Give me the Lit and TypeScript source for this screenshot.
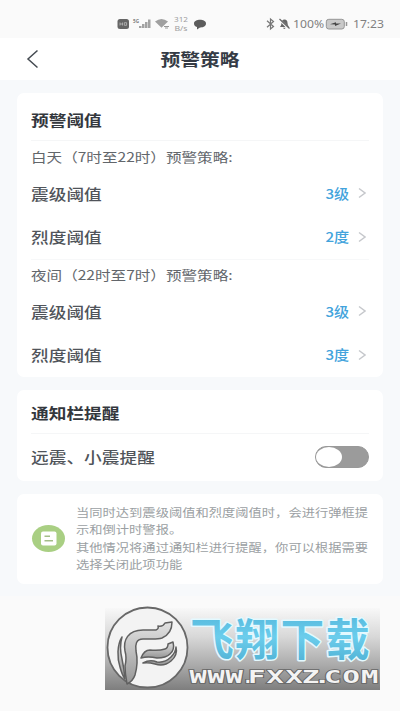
import { LitElement, html, css } from "lit";
import { customElement, property } from "lit/decorators.js";

@customElement("status-bar")
class StatusBar extends LitElement {
  static styles = css`
    :host { display: block; height: 38px; background: #fafafa; }
    svg { display: block; }
    text { font-family: "Noto Sans", sans-serif; fill: #808080; }
  `;
  render() {
    return html`<svg width="400" height="38" viewBox="0 0 400 38">
      <rect x="117.5" y="19" width="11.5" height="10" rx="2.5" fill="#666" />
      <path d="M120 22.5v3M122.5 22.5v3M120 24h2.5M124.3 22.7h2.3v2.6h-2.3z" stroke="#bbb" stroke-width=".8" fill="none" />
      <text x="133" y="23" font-size="5" font-weight="700" textLength="6" lengthAdjust="spacingAndGlyphs">5G</text>
      <path d="M139 28v-2h2.500v2zM142 28v-4h2.500v4zM145 28v-6h2.500v6zM148 28v-8.500h2.500v8.500z" fill="#a2a2a2" />
      <path d="M155 21.500q6.500-5 13 0l-6.500 6.300z" fill="#a0a0a0" />
      <path d="M164 26.500h5M165 28h3" stroke="#999" stroke-width="1" />
      <text x="174" y="22" font-size="7.500" textLength="14" lengthAdjust="spacingAndGlyphs" opacity=".75">312</text>
      <text x="174.500" y="30.500" font-size="7" textLength="13" lengthAdjust="spacingAndGlyphs" opacity=".75">B/s</text>
      <path d="M194 23.500c0-5 12-5 12 0 0 3.500-4 4-6 4l-3 2v-2.500q-3-1-3-3.500z" fill="#5c5c5c" />
      <path d="M267 20.800l6.500 5.700-3 2.500v-10l3 2.500-6.500 5.700" stroke="#777" stroke-width="1.200" fill="none" />
      <path d="M280 27q1.500-1.500 1.500-4 0-3.500 3-3.500t3 3.500q0 2.500 1.500 4zM282.800 27.800h3q-1.500 2.200-3 0z" fill="#666" />
      <path d="M279 19l10 10" stroke="#fafafa" stroke-width="2.200" /><path d="M279.500 19l10 9.500" stroke="#666" stroke-width="1.200" />
      <text x="293" y="28" font-size="10.500" textLength="31" lengthAdjust="spacingAndGlyphs">100%</text>
      <rect x="326.300" y="19.300" width="18" height="9.700" rx="2.500" fill="#c9c9c9" stroke="#959595" />
      <path d="M346.500 22v4" stroke="#959595" stroke-width="1.500" />
      <path d="M330 24.200l6-2v1.400h5l-6 2.400v-1.500z" fill="#444" />
      <text x="353" y="28" font-size="10.500" textLength="31" lengthAdjust="spacingAndGlyphs">17:23</text>
    </svg>`;
  }
}

@customElement("setting-row")
class SettingRow extends LitElement {
  @property() label = "";
  @property() value = "";
  static styles = css`
    :host { display: flex; align-items: center; justify-content: space-between; height: 43.5px; }
    .label { font-size: 15px; font-weight: 500; color: #50545a; transform: scaleX(1.18); transform-origin: left; }
    .right { display: flex; align-items: center; gap: 9px; margin-right: 2.500px; }
    .value { font-size: 13.5px; font-weight: 500; color: #42a3dc; transform: scaleX(1.12); transform-origin: right; }
    svg { display: block; }
  `;
  render() {
    return html`<span class="label">${this.label}</span>
      ${this.value
        ? html`<span class="right"><span class="value">${this.value}</span>
            <svg width="8" height="12" viewBox="0 0 8 12"><path d="M1 1.500l6 4.500-6 4.500" fill="none" stroke="#c6c8cc" stroke-width="1.500" /></svg></span>`
        : html`<slot></slot>`}`;
  }
}

@customElement("site-badge")
class SiteBadge extends LitElement {
  static styles = css`
    :host { display: block; width: 275px; height: 82px; background: linear-gradient(#f8f8f8, #d8d8d8 35%, #aaa 70%, #7e7e7e); }
    svg { display: block; overflow: visible; }
    .name { font: 700 44px "Noto Sans CJK SC", sans-serif; letter-spacing: 1.5px; paint-order: stroke; stroke: #e4f9ff; stroke-width: 3px; stroke-linejoin: round; fill: url(#sky); }
    .url { font: 700 18px "DejaVu Sans Mono", monospace; paint-order: stroke; stroke: #666; stroke-width: 1.5px; fill: #f3f3f3; }
  `;
  render() {
    const scale = 1.6;
    const stops = [84.5, 102.5, 120.500, 135, 143, 161.5, 180.500, 197, 208.500, 219, 237.5, 256].map((x) => (x / scale).toFixed(2)).join(" ");
    return html`<svg width="275" height="82" viewBox="0 0 275 82">
      <defs>
        <linearGradient id="sky" x1="0" y1="0" x2="0" y2="1">
          <stop offset="0" stop-color="#4fb2d8" /><stop offset=".5" stop-color="#6bcdec" /><stop offset="1" stop-color="#4bacd0" />
        </linearGradient>
        <linearGradient id="body" x1="0" y1="0" x2="0" y2="1">
          <stop offset="0" stop-color="#e2e2e2" /><stop offset="1" stop-color="#969696" />
        </linearGradient>
      </defs>
      <circle cx="42.500" cy="39.500" r="40" fill="#f3f3f3" stroke="#686868" stroke-width="1.800" />
      <g stroke="#606060" stroke-width="1.500" stroke-linejoin="round" fill="url(#body)">
        <path d="M17 29C12 37 12 50 15 59Q17 67 20 71Q19 60 17 51C15 43 15 36 17 29Z" />
        <path d="M22 76Q20 66 20 58Q22 50 20 43C18 32 23 22 38 22H51Q54 21 53 18Q58 19 60 15L67 14C67 22 64 27 57 30Q54 31 47 31H38C31 31 30 37 31 43C33 52 32 60 30 67Q28 73 22 76Z" />
        <path d="M36 50Q39 42 45 42Q54 43 60 41Q63 40 63 36L68 34Q70 42 65 46Q61 50 52 50Q43 48 36 50Z" />
        <path d="M38 55Q45 51 52 54Q60 55 66 49Q71 44 71 39Q73 47 66 53Q59 59 50 56Q43 54 38 55Z" />
      </g>
      <text class="name" x="85" y="48" textLength="181" lengthAdjust="spacingAndGlyphs">飞翔下载</text>
      <text class="url" transform="scale(${scale} 1)" x=${stops} y="75.500">WWW.FXXZ.COM</text>
    </svg>`;
  }
}

@customElement("app-root")
class AppRoot extends LitElement {
  static styles = css`
    :host { display: block; position: relative; width: 400px; height: 711px; overflow: hidden; background: #fafafa; font-family: "Noto Sans CJK SC", sans-serif; line-height: 1; white-space: nowrap; }
    header { display: grid; grid-template-columns: 60px 1fr 60px; align-items: center; height: 41.5px; background: #fff; }
    .back { display: block; margin-left: 26px; }
    .title { justify-self: center; font-size: 17px; font-weight: 700; color: #353b45; transform: scaleX(1.165); }
    main { display: flex; flex-direction: column; gap: 13px; box-sizing: border-box; height: 516px; padding: 13px 17.5px 0 17px; background: #f7f9fb; }
    .card { box-sizing: border-box; padding: 0 14px; border-radius: 7px; background: #fff; }
    .head { display: flex; align-items: center; box-sizing: border-box; height: 48.5px; padding-top: 5px; border-bottom: 1px solid #f5f6f7; }
    .card.alerts { height: 284px; }
    .card.alerts .head { padding-top: 6px; }
    .card.notify { height: 91px; }
    .card.notify .head { height: 44.5px; padding-top: 2px; }
    .notify setting-row { padding-top: 1px; }
    .wide { transform: scaleX(1.18); transform-origin: left; }
    .head .wide { font-size: 15px; font-weight: 700; color: #33373d; }
    .sub { display: flex; align-items: center; height: 30.5px; font-size: 13px; color: #62666b; }
    .sub .wide { transform: scaleX(1.198); }
    .line { border-top: 1px solid #f7f8f9; height: 30px; }
    .switch { box-sizing: border-box; width: 54px; height: 22px; border: 1px solid #999; border-radius: 11px; background: #9b9b9b; }
    .knob { width: 26px; height: 20px; border-radius: 50%; background: #fff; }
    .card.tip { display: flex; align-items: center; gap: 10.5px; height: 90px; }
    .tip svg { flex: none; margin-right: 0; }
    .tip p { margin: 0; font-size: 11.3px; line-height: 17.5px; color: #9b9fa3; transform: scaleX(1.175); transform-origin: left; }
    site-badge { position: absolute; left: 105px; top: 607.5px; }
  `;
  render() {
    return html`
      <status-bar></status-bar>
      <header>
        <svg class="back" width="14" height="20" viewBox="0 0 14 20"><path d="M11.500 1.500L2 10l9.500 8.500" fill="none" stroke="#454b52" stroke-width="1.500" /></svg>
        <span class="title">预警策略</span>
      </header>
      <main>
        <section class="card alerts">
          <div class="head"><span class="wide">预警阈值</span></div>
          <div class="sub"><span class="wide">白天（7时至22时）预警策略:</span></div>
          <setting-row label="震级阈值" value="3级"></setting-row>
          <setting-row label="烈度阈值" value="2度"></setting-row>
          <div class="sub line"><span class="wide">夜间（22时至7时）预警策略:</span></div>
          <setting-row label="震级阈值" value="3级"></setting-row>
          <setting-row label="烈度阈值" value="3度"></setting-row>
        </section>
        <section class="card notify">
          <div class="head"><span class="wide">通知栏提醒</span></div>
          <setting-row label="远震、小震提醒"><div class="switch"><div class="knob"></div></div></setting-row>
        </section>
        <section class="card tip">
          <svg width="34" height="28" viewBox="0 0 34 28">
            <ellipse cx="17.500" cy="13.500" rx="16.500" ry="13.500" fill="#a9cf83" />
            <rect x="10" y="6.500" width="15.500" height="14" rx="2" fill="#fff" />
            <path d="M13.500 11.300h5.500M13.500 15.800h8.500" stroke="#a3bd88" stroke-width="1.500" />
          </svg>
          <p>当同时达到震级阈值和烈度阈值时，会进行弹框提<br />示和倒计时警报。<br />其他情况将通过通知栏进行提醒，你可以根据需要<br />选择关闭此项功能</p>
        </section>
      </main>
      <site-badge></site-badge>
    `;
  }
}
